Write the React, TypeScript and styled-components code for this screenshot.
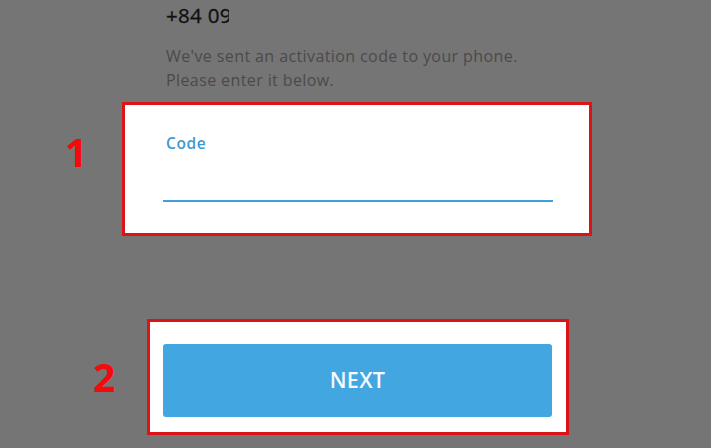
import React from "react";
import styled, { createGlobalStyle } from "styled-components";

const Global = createGlobalStyle`
  html, body { margin: 0; padding: 0; background: #757575; }
  * { box-sizing: border-box; }
`;

const Page = styled.div`
  width: 711px;
  height: 448px;
  overflow: hidden;
  background: #757575;
  font-family: "Open Sans", "Liberation Sans", sans-serif;
  display: flex;
  flex-direction: column;
`;

const Header = styled.div`
  padding: 2px 0 0 166px;
  display: flex;
  flex-direction: column;
`;

const Phone = styled.div`
  font-size: 20.5px;
  font-weight: 500;
  line-height: 27px;
  letter-spacing: 0.3px;
  color: #0f0f0f;
  -webkit-text-stroke: 0.3px #0f0f0f;
  width: 63px;
  overflow: hidden;
  white-space: nowrap;
`;

const Description = styled.p`
  margin: 15px 0 0 0;
  font-size: 16px;
  line-height: 24px;
  letter-spacing: 0.4px;
  color: #4a4a4a;
`;

const AnnotatedRow = styled.div<{ $top: number }>`
  display: flex;
  align-items: flex-start;
  margin-top: ${(p) => p.$top}px;
`;

const Marker = styled.div<{ $left: number; $top: number; $width: number }>`
  margin-left: ${(p) => p.$left}px;
  margin-top: ${(p) => p.$top}px;
  width: ${(p) => p.$width}px;
  font-family: "Open Sans", "Liberation Sans", sans-serif;
  font-weight: 700;
  font-size: 39px;
  line-height: 1;
  color: #f40a0a;
`;

const HighlightBox = styled.div<{ $width: number; $height: number }>`
  width: ${(p) => p.$width}px;
  height: ${(p) => p.$height}px;
  border: 3px solid #dc1418;
  background: #ffffff;
`;

const Field = styled.div`
  padding: 28px 36px 0 38px;
  display: flex;
  flex-direction: column;
`;

const FieldLabel = styled.label`
  margin-left: 3px;
  font-size: 15.5px;
  font-weight: 600;
  line-height: 20px;
  letter-spacing: 0.6px;
  color: #3f98cf;
`;

const CodeInput = styled.input`
  height: 49px;
  width: 100%;
  border: none;
  border-bottom: 2px solid #3f9fda;
  outline: none;
  background: transparent;
  font-family: inherit;
  font-size: 16px;
  padding: 0 0 0 3px;
`;

const ButtonWrap = styled.div`
  padding: 22px 14px 0 13px;
`;

const NextButton = styled.button`
  width: 389px;
  height: 73px;
  border: none;
  border-radius: 3px;
  background: #42a6e1;
  color: #f4f9fd;
  font-family: "Open Sans", "Liberation Sans", sans-serif;
  font-weight: 600;
  font-size: 21.5px;
  letter-spacing: 0.3px;
  cursor: pointer;
  padding: 0 0 2px 0;
`;

export default function App() {
  return (
    <Page>
      <Global />
      <Header>
        <Phone>+84 09</Phone>
        <Description>
          We've sent an activation code to your phone.
          <br />
          Please enter it below.
        </Description>
      </Header>
      <AnnotatedRow $top={10}>
        <Marker $left={65} $top={30} $width={57}>1</Marker>
        <HighlightBox $width={470} $height={134}>
          <Field>
            <FieldLabel htmlFor="code">Code</FieldLabel>
            <CodeInput id="code" />
          </Field>
        </HighlightBox>
      </AnnotatedRow>
      <AnnotatedRow $top={83}>
        <Marker $left={93} $top={38} $width={54}>2</Marker>
        <HighlightBox $width={422} $height={116}>
          <ButtonWrap>
            <NextButton>NEXT</NextButton>
          </ButtonWrap>
        </HighlightBox>
      </AnnotatedRow>
    </Page>
  );
}
